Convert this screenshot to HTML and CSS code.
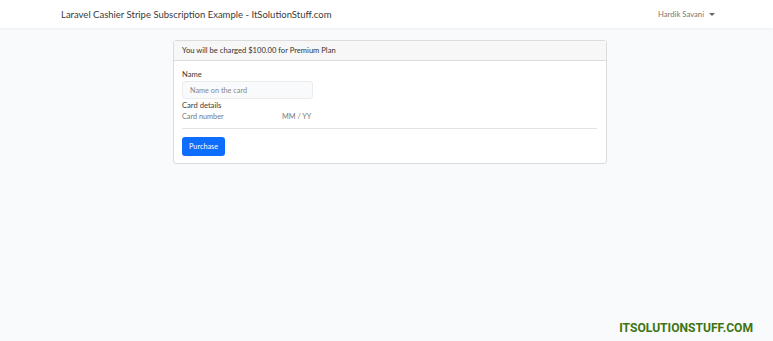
FILE: index.html
```html
<!DOCTYPE html>
<html lang="en">
<head>
  <meta charset="UTF-8">
  <meta name="viewport" content="width=device-width, initial-scale=1.0">
  <title>Laravel Cashier Stripe Subscription Example - ItSolutionStuff.com</title>
  <link rel="stylesheet" href="styles.css">
</head>
<body>
  <nav class="navbar">
    <a class="brand" href="#">Laravel Cashier Stripe Subscription Example - ItSolutionStuff.com</a>
    <a class="user" href="#">Hardik Savani <span class="caret"></span></a>
  </nav>

  <main class="content">
    <div class="card">
      <div class="card-header">You will be charged $100.00 for Premium Plan</div>
      <div class="card-body">
        <form>
          <label for="cardName">Name</label>
          <input type="text" id="cardName" class="field" placeholder="Name on the card">
          <label class="details">Card details</label>
          <div class="card-element">
            <span class="num">Card number</span>
            <span>MM / YY</span>
          </div>
          <hr>
          <button type="button" class="btn">Purchase</button>
        </form>
      </div>
    </div>
  </main>

  <div class="watermark">ITSOLUTIONSTUFF.COM</div>
</body>
</html>
```

FILE: styles.css
```css
body {
  margin: 0;
  background: #f8fafc;
  font-family: Lato, "Noto Sans", sans-serif;
  color: #333;
  height: 341px;
  overflow: hidden;
  position: relative;
}
a {
  text-decoration: none;
}
.navbar {
  height: 28px;
  background: #fff;
  box-shadow: 0 1px 3px rgba(0, 0, 0, 0.06);
  display: flex;
  align-items: center;
  justify-content: space-between;
  padding: 0 58px 0 61px;
}
.brand {
  font-size: 9.5px;
  color: #3a3a3a;
}
.user {
  font-size: 7.7px;
  color: #777;
  display: flex;
  align-items: center;
}
.caret {
  display: inline-block;
  margin-left: 5px;
  border-top: 3px solid #666;
  border-left: 3px solid transparent;
  border-right: 3px solid transparent;
}
.content {
  display: flex;
  justify-content: center;
  padding-top: 12px;
  padding-left: 7px;
}
.card {
  width: 432px;
  background: #fff;
  border: 1px solid #dcdcdc;
  border-radius: 3px;
}
.card-header {
  height: 19px;
  line-height: 19px;
  padding: 0 8px;
  background: #f7f7f7;
  border-bottom: 1px solid #dcdcdc;
  font-size: 7.6px;
  color: #333;
}
.card-body {
  padding: 9px 9px 7px 8px;
}
label {
  display: block;
  font-size: 7.6px;
  line-height: 9px;
  color: #3a3a3a;
}
.field {
  display: block;
  box-sizing: border-box;
  width: 131px;
  height: 18px;
  margin-top: 2px;
  padding: 0 7px;
  border: 1px solid #ececec;
  border-radius: 3px;
  background: #f8fafc;
  font-family: inherit;
  font-size: 7.3px;
}
.field::placeholder {
  color: #888;
}
.details {
  margin-top: 2px;
}
.card-element {
  display: flex;
  font-size: 7.3px;
  color: #777;
  line-height: 11px;
  margin-top: 1px;
}
.num {
  width: 100px;
}
hr {
  border: none;
  border-top: 1px solid #e2e2e2;
  margin: 6px 0 8px;
}
.btn {
  display: block;
  height: 19px;
  padding: 0 7px;
  border: none;
  border-radius: 3px;
  background: #0d6efd;
  color: #fff;
  font-family: inherit;
  font-size: 7.3px;
}
.watermark {
  position: absolute;
  right: 20px;
  bottom: 6px;
  font-family: Roboto, "Liberation Sans", sans-serif;
  font-weight: 700;
  font-size: 12.1px;
  color: #3e7413;
}
```
